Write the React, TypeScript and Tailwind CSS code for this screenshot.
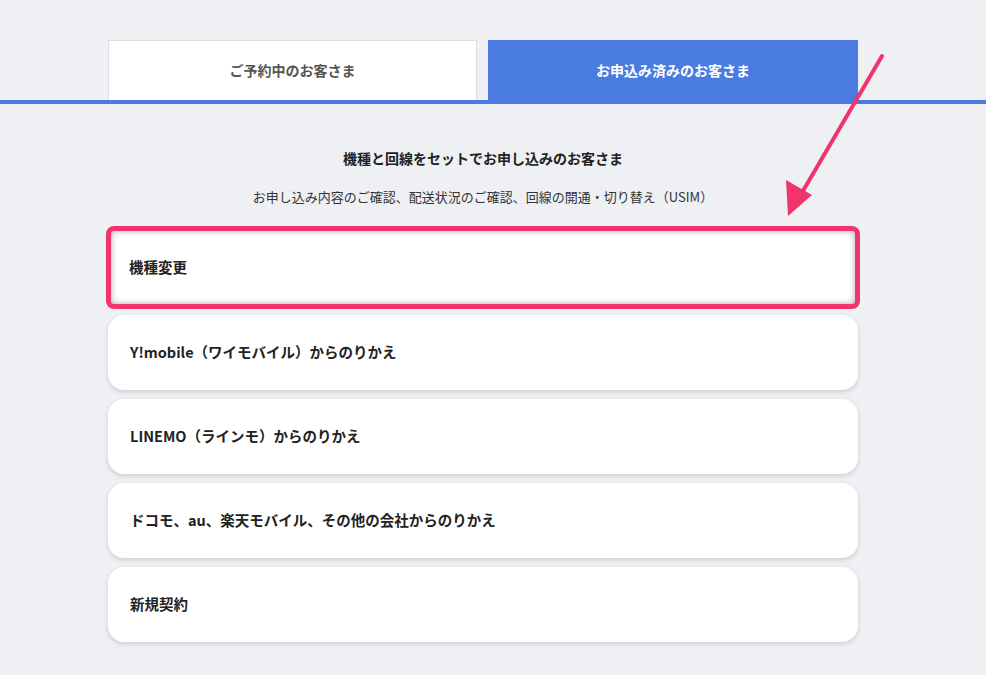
export default function App() {
  const items = ["Y!mobile（ワイモバイル）からのりかえ", "LINEMO（ラインモ）からのりかえ", "ドコモ、au、楽天モバイル、その他の会社からのりかえ", "新規契約"];
  return (
    <div className="relative w-[986px] h-[675px] overflow-hidden bg-[#eef0f3] text-[#222]" style={{ fontFamily: '"Noto Sans CJK JP", "Noto Sans", sans-serif' }}>
      <div className="pt-[40px] border-b-[4px] border-[#4a7be0]">
        <div className="flex w-[750px] ml-[108px] gap-[11px]">
          <div className="w-[369px] h-[60px] bg-white border border-[#ddd] border-b-0 flex items-center justify-center text-[14px] font-bold text-[#555]">ご予約中のお客さま</div>
          <div className="w-[370px] h-[60px] bg-[#4a7be0] flex items-center justify-center text-[14px] font-bold text-white">お申込み済みのお客さま</div>
        </div>
      </div>
      <div className="w-[750px] ml-[108px] flex flex-col items-center">
        <div className="mt-[44px] text-[14px] font-bold">機種と回線をセットでお申し込みのお客さま</div>
        <div className="mt-[18px] text-[13px] text-[#333]">お申し込み内容のご確認、配送状況のご確認、回線の開通・切り替え（USIM）</div>
        <div className="mt-[19px] w-full flex flex-col gap-[9px]">
          <div className="h-[83px] -mb-[3px] -mx-[2px] rounded-[8px] border-[5px] border-[#f0346c] bg-white shadow-[inset_0_0_6px_rgba(0,0,0,0.35)] flex items-center px-[18px] text-[14.5px] font-bold">機種変更</div>
          {items.map((t) => (
            <div key={t} className="h-[75px] rounded-[16px] bg-white shadow-[0_2px_5px_rgba(0,0,0,0.15)] flex items-center px-[22px] text-[14.5px] font-bold">{t}</div>
          ))}
        </div>
      </div>
      <svg className="absolute left-0 top-0" width="986" height="675">
        <line x1="882" y1="56" x2="800" y2="196" stroke="#f0346c" strokeWidth="4" strokeLinecap="round" />
        <polygon points="788,216 786,180 812,195" fill="#f0346c" />
      </svg>
    </div>
  );
}
